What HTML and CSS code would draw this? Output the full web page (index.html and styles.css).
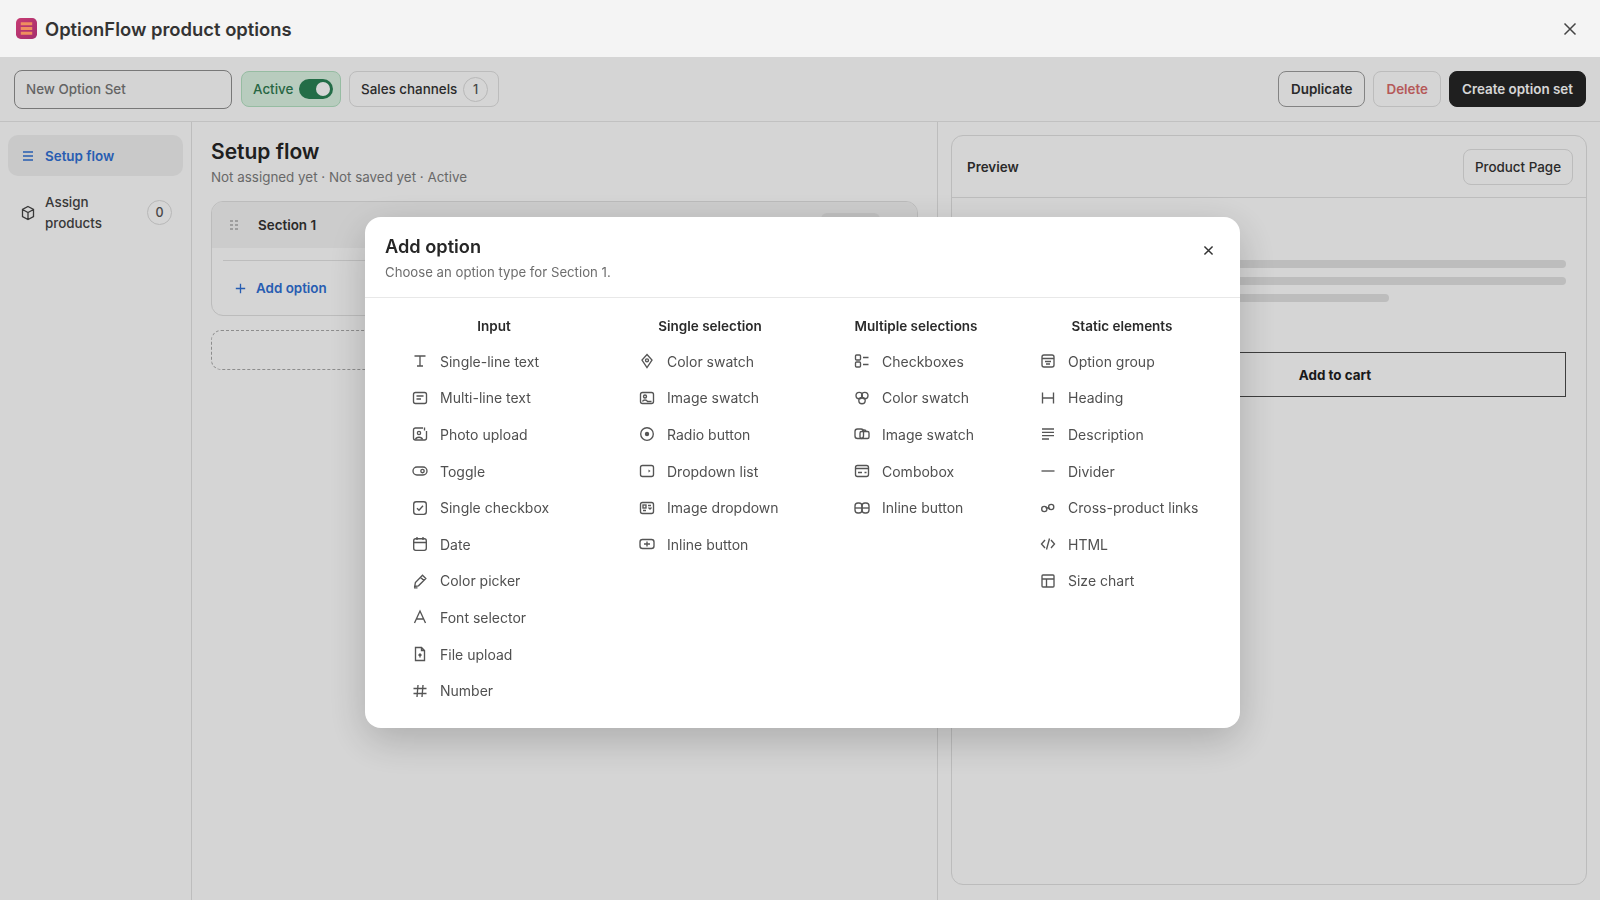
FILE: index.html
```html
<!DOCTYPE html>
<html lang="en">
<head>
    <meta charset="UTF-8">
    <meta name="viewport" content="width=device-width, initial-scale=1.0">
    <title>OptionFlow product options</title>
    <link rel="stylesheet" href="styles.css">
</head>
<body>
    <header class="titlebar">
        <svg class="logo" viewBox="0 0 22 22">
            <defs>
                <linearGradient id="logoFill" x1="0" y1="0" x2="1" y2="1">
                    <stop offset="0" stop-color="#c63a72"/>
                    <stop offset="1" stop-color="#a52f6e"/>
                </linearGradient>
            </defs>
            <rect width="22" height="22" rx="5" fill="url(#logoFill)"/>
            <path d="M5 6h12M5 11h12M5 16h12" stroke="#ef8f5f" stroke-width="3"/>
        </svg>
        <h1 class="app-name">OptionFlow product options</h1>
        <svg class="app-close" viewBox="0 0 16 16"><path d="M2.5 2.5l11 11M13.5 2.5l-11 11"/></svg>
    </header>

    <div class="toolbar">
        <div class="name-input">New Option Set</div>
        <div class="status-pill">Active <span class="switch"></span></div>
        <div class="channels-pill">Sales channels <span class="count">1</span></div>
        <div class="toolbar-actions">
            <button class="btn btn-strong">Duplicate</button>
            <button class="btn btn-danger">Delete</button>
            <button class="btn btn-dark">Create option set</button>
        </div>
    </div>

    <div class="workspace">
        <nav class="sidebar">
            <a class="nav-item nav-active">
                <svg class="nav-icon" viewBox="0 0 16 16"><path d="M3 4h10M3 8h10M3 12h10"/></svg>
                Setup flow
            </a>
            <a class="nav-item">
                <svg class="nav-icon" viewBox="0 0 16 16"><path d="M8 1.5l5.5 3v7L8 14.5l-5.5-3v-7zM2.5 4.5L8 7.5l5.500-3M8 7.500v7"/></svg>
                <span class="nav-label">Assign products</span>
                <span class="count">0</span>
            </a>
        </nav>

        <main class="flow">
            <h2 class="flow-title">Setup flow</h2>
            <p class="flow-meta">Not assigned yet · Not saved yet · Active</p>
            <section class="section-card">
                <div class="section-head">
                    <span class="grip"></span>
                    <strong>Section 1</strong>
                    <span class="section-tag"></span>
                </div>
                <div class="section-body">
                    <a class="add-option">
                        <svg class="add-icon" viewBox="0 0 16 16"><path d="M8 3v10M3 8h10"/></svg>
                        Add option
                    </a>
                </div>
            </section>
            <div class="add-section"></div>
        </main>

        <aside class="preview">
            <div class="preview-head">
                <strong>Preview</strong>
                <button class="btn page-btn">Product Page</button>
            </div>
            <div class="preview-body">
                <div class="preview-image"></div>
                <div class="preview-details">
                    <div class="bar"></div>
                    <div class="bar"></div>
                    <div class="bar bar-short"></div>
                    <div class="cart-btn">Add to cart</div>
                </div>
            </div>
        </aside>
    </div>

    <div class="overlay">
        <div class="modal">
            <div class="modal-head">
                <h2 class="modal-title">Add option</h2>
                <p class="modal-sub">Choose an option type for Section 1.</p>
                <svg class="modal-close" viewBox="0 0 16 16"><path d="M3 3l10 10M13 3L3 13"/></svg>
            </div>
            <div class="option-grid">
                <div class="option-col col-input">
                    <h3 class="col-title">Input</h3>
                    <div class="option"><svg viewBox="0 0 16 16"><path d="M2.5 3h11M8 3v10M5 13h6"/></svg>Single-line text</div>
                    <div class="option"><svg viewBox="0 0 16 16"><rect x="1.5" y="2.5" width="13" height="11" rx="2"/><path d="M4.5 6h7M4.5 9H9"/></svg>Multi-line text</div>
                    <div class="option"><svg viewBox="0 0 16 16"><path d="M11 2H3.5a2 2 0 0 0-2 2v8a2 2 0 0 0 2 2h9a2 2 0 0 0 2-2V5"/><circle cx="7" cy="7" r="1.6"/><path d="M3.5 13.5c.8-3 6.2-3 7 0M12.5 1.5v3"/></svg>Photo upload</div>
                    <div class="option"><svg viewBox="0 0 16 16"><rect x="1" y="4" width="14" height="8" rx="4"/><circle cx="10.5" cy="8" r="1.7"/></svg>Toggle</div>
                    <div class="option"><svg viewBox="0 0 16 16"><rect x="1.7" y="1.7" width="12.6" height="12.6" rx="2.5"/><path d="M5 8.2l2 2 4-4.5"/></svg>Single checkbox</div>
                    <div class="option"><svg viewBox="0 0 16 16"><rect x="1.7" y="2.7" width="12.6" height="11.6" rx="2"/><path d="M1.7 6.5h12.6M5 1v3M11 1v3"/></svg>Date</div>
                    <div class="option"><svg viewBox="0 0 16 16"><path d="M10.5 2.2l3.300 3.300-7.300 7.300-3.800.7.7-4zM8.500 4.200l3.300 3.300M2 14.800h3.500"/></svg>Color picker</div>
                    <div class="option"><svg viewBox="0 0 16 16"><path d="M2.5 14L8 2l5.500 12M4.500 10h7"/></svg>Font selector</div>
                    <div class="option"><svg viewBox="0 0 16 16"><path d="M3.5 1.5h6l3 3v10h-9zM9.5 1.5v3h3M8 11.5V8M6.5 9.5L8 8l1.5 1.5"/></svg>File upload</div>
                    <div class="option"><svg viewBox="0 0 16 16"><path d="M6 2L5 14M11 2l-1 12M1.5 5.5h13M1.5 10.5h13"/></svg>Number</div>
                </div>
                <div class="option-col col-single">
                    <h3 class="col-title">Single selection</h3>
                    <div class="option"><svg viewBox="0 0 16 16"><path d="M8 1.5L13 7l-5 7.500L3 7z"/><circle cx="8" cy="7.3" r="1.5"/></svg>Color swatch</div>
                    <div class="option"><svg viewBox="0 0 16 16"><rect x="1.5" y="2.5" width="13" height="11" rx="2"/><circle cx="6" cy="6.5" r="1.5"/><path d="M3.5 11.5c.8-2 4.2-2 5 0h4"/></svg>Image swatch</div>
                    <div class="option"><svg viewBox="0 0 16 16"><circle cx="8" cy="8" r="6.3"/><circle class="solid" cx="8" cy="8" r="2.2"/></svg>Radio button</div>
                    <div class="option"><svg viewBox="0 0 16 16"><rect x="1.5" y="2.5" width="13" height="11" rx="2"/><path class="solid" d="M9.5 6.500l2 1.500-2 1.500z"/></svg>Dropdown list</div>
                    <div class="option"><svg viewBox="0 0 16 16"><rect x="1.5" y="2.5" width="13" height="11" rx="2"/><rect x="4" y="5" width="3" height="3"/><path d="M9 5.500h3M9.500 7.500l1.500 1.500 1.500-1.500M4 10.500h3"/></svg>Image dropdown</div>
                    <div class="option"><svg viewBox="0 0 16 16"><rect x="1" y="3.5" width="14" height="9" rx="2.5"/><path d="M8 5.500v5M5 8h6"/></svg>Inline button</div>
                </div>
                <div class="option-col col-multi">
                    <h3 class="col-title">Multiple selections</h3>
                    <div class="option"><svg viewBox="0 0 16 16"><rect x="1.5" y="2" width="5" height="5" rx="1"/><rect x="1.5" y="9" width="5" height="5" rx="1"/><path d="M9 4.500h5.500M9 11.500h5.500"/></svg>Checkboxes</div>
                    <div class="option"><svg viewBox="0 0 16 16"><circle cx="5.2" cy="5.5" r="3.2"/><circle cx="10.8" cy="5.5" r="3.2"/><circle cx="8" cy="10.5" r="3.2"/></svg>Color swatch</div>
                    <div class="option"><svg viewBox="0 0 16 16"><rect x="1" y="3" width="8.5" height="9.5" rx="2.5"/><rect x="6" y="5.5" width="9" height="7" rx="1.5"/><path d="M8.500 5.500c0-2 3.500-2 3.500 0"/></svg>Image swatch</div>
                    <div class="option"><svg viewBox="0 0 16 16"><rect x="1.5" y="2.5" width="13" height="11" rx="2"/><path d="M1.500 5.500h13M4 9.500h4M10.500 9.500h2"/></svg>Combobox</div>
                    <div class="option"><svg viewBox="0 0 16 16"><rect x="1" y="3" width="7" height="10" rx="3"/><rect x="8" y="3" width="7" height="10" rx="3"/><path d="M1 8h14"/></svg>Inline button</div>
                </div>
                <div class="option-col col-static">
                    <h3 class="col-title">Static elements</h3>
                    <div class="option"><svg viewBox="0 0 16 16"><rect x="2" y="2" width="12" height="12" rx="2"/><path d="M2 5.500h12M5 8.500h6M6 11h4"/></svg>Option group</div>
                    <div class="option"><svg viewBox="0 0 16 16"><path d="M2.500 2.500v11M13.500 2.500v11M2.500 8h11"/></svg>Heading</div>
                    <div class="option"><svg viewBox="0 0 16 16"><path d="M2 3h12M2 6.300h12M2 9.600h12M2 13h7"/></svg>Description</div>
                    <div class="option"><svg viewBox="0 0 16 16"><path d="M1.500 8h13"/></svg>Divider</div>
                    <div class="option"><svg viewBox="0 0 16 16"><circle cx="4.3" cy="9" r="2.6"/><circle cx="11.2" cy="7" r="2.6"/><path d="M5.500 7.500l4.500 1"/></svg>Cross-product links</div>
                    <div class="option"><svg viewBox="0 0 16 16"><path d="M5 4L1.500 8 5 12M11 4l3.500 4-3.500 4M9.500 2.500l-3 11"/></svg>HTML</div>
                    <div class="option"><svg viewBox="0 0 16 16"><rect x="2" y="2" width="12" height="12" rx="1"/><path d="M2 6h12M6.500 6v8"/></svg>Size chart</div>
                </div>
            </div>
        </div>
    </div>
</body>
</html>
```

FILE: styles.css
```css
* {
    box-sizing: border-box;
}
html, body {
    height: 100%;
}
body {
    margin: 0;
    display: flex;
    flex-direction: column;
    overflow: hidden;
    font-family: Inter, "Noto Sans", sans-serif;
    font-size: 13.4px;
    color: #2a2a2a;
    background-color: #fefefe;
}
h1, h2, h3, p {
    margin: 0;
}
button {
    font: inherit;
}

/* top bar stays above the dimmed layer */
.titlebar {
    height: 57px;
    flex: none;
    display: flex;
    align-items: center;
    padding: 0 22px 0 16px;
    background-color: #f4f4f4;
}
.logo {
    width: 21px;
    height: 21px;
    margin-right: 8px;
}
.app-name {
    font-size: 18.4px;
    font-weight: 600;
    color: #333;
}
.app-close {
    width: 16px;
    height: 16px;
    margin-left: auto;
    fill: none;
    stroke: #444;
    stroke-width: 1.5;
}

.toolbar {
    height: 65px;
    flex: none;
    display: flex;
    align-items: center;
    padding: 0 14px;
    border-bottom: 1px solid #e6e6e6;
}
.name-input {
    width: 218px;
    height: 39px;
    padding: 0 11px;
    line-height: 37px;
    font-weight: 500;
    color: #777;
    border: 1.5px solid #8f8f8f;
    border-radius: 8px;
    background-color: #fdfdfd;
}
.status-pill {
    width: 100px;
    height: 36px;
    margin-left: 9px;
    display: flex;
    align-items: center;
    justify-content: space-between;
    padding: 0 7px 0 11px;
    font-weight: 500;
    color: #2f7a50;
    background-color: #dcf3e3;
    border: 1px solid #b3e0c2;
    border-radius: 8px;
}
.switch {
    width: 34px;
    height: 20px;
    position: relative;
    background-color: #2a8255;
    border-radius: 10px;
}
.switch::after {
    content: "";
    position: absolute;
    top: 3px;
    right: 3px;
    width: 14px;
    height: 14px;
    background-color: #fff;
    border-radius: 50%;
}
.channels-pill {
    width: 150px;
    height: 36px;
    margin-left: 8px;
    display: flex;
    align-items: center;
    justify-content: space-between;
    padding: 0 10px 0 11px;
    font-weight: 500;
    color: #333;
    border: 1px solid #e0e0e0;
    border-radius: 8px;
}
.count {
    width: 25px;
    height: 25px;
    display: flex;
    align-items: center;
    justify-content: center;
    flex: none;
    font-size: 12.5px;
    font-weight: 500;
    color: #555;
    border: 1px solid #dcdcdc;
    border-radius: 50%;
}
.toolbar-actions {
    margin-left: auto;
    display: flex;
    gap: 8px;
}
.btn {
    height: 36px;
    padding: 0 12px;
    font-weight: 600;
    color: #333;
    background: transparent;
    border: 1px solid #e0e0e0;
    border-radius: 8px;
}
.btn-strong {
    border: 1.5px solid #9c9c9c;
}
.btn-danger {
    color: #d86b6b;
}
.btn-dark {
    color: #fff;
    background-color: #262626;
    border-color: #262626;
}

.workspace {
    flex: 1;
    display: flex;
    min-height: 0;
}
.sidebar {
    width: 192px;
    flex: none;
    padding: 13px 8px;
    border-right: 1px solid #e2e2e2;
}
.nav-item {
    display: flex;
    align-items: center;
    padding: 1px 11px 0 12px;
    height: 41px;
    font-weight: 500;
    line-height: 21px;
    color: #444;
    border-radius: 10px;
}
.nav-item + .nav-item {
    height: 62px;
    margin-top: 5px;
}
.nav-active {
    font-weight: 600;
    color: #2f6fd4;
    background-color: #f0f0f0;
}
.nav-icon {
    width: 16px;
    height: 16px;
    flex: none;
    margin-right: 9px;
    fill: none;
    stroke: currentColor;
    stroke-width: 1.3;
}
.nav-label {
    flex: 1;
    width: 70px;
    padding-right: 30px;
}

.flow {
    width: 746px;
    flex: none;
    padding: 16px 19px 0;
    border-right: 1px solid #e2e2e2;
}
.flow-title {
    font-size: 21px;
    font-weight: 600;
    line-height: 28px;
    color: #262626;
}
.flow-meta {
    margin-top: 1px;
    line-height: 20px;
    color: #7d7d7d;
}
.section-card {
    margin-top: 14px;
    height: 115px;
    border: 1px solid #e0e0e0;
    border-radius: 12px;
    overflow: hidden;
}
.section-head {
    height: 46px;
    display: flex;
    align-items: center;
    padding: 0 37px 0 17px;
    background-color: #f4f4f4;
}
.section-head strong {
    font-weight: 600;
    color: #333;
}
.grip {
    width: 9px;
    height: 12px;
    margin-right: 20px;
    background-image: radial-gradient(circle, #bdbdbd 1.2px, transparent 1.4px);
    background-size: 5px 4px;
}
.section-tag {
    width: 59px;
    height: 24px;
    margin-left: auto;
    background-color: #e6e6e6;
    border-radius: 6px;
}
.section-body {
    margin: 12px 11px 0;
    padding-top: 19px;
    border-top: 1px solid #e2e2e2;
}
.add-option {
    display: flex;
    align-items: center;
    padding-left: 10px;
    font-weight: 600;
    color: #2f6fd4;
}
.add-icon {
    width: 15px;
    height: 15px;
    margin-right: 8px;
    fill: none;
    stroke: currentColor;
    stroke-width: 1.4;
}
.add-section {
    margin-top: 14px;
    height: 40px;
    border: 1px dashed #a8a8a8;
    border-radius: 10px;
}

.preview {
    flex: 1;
    margin: 13px 13px 15px;
    border: 1px solid #e0e0e0;
    border-radius: 12px;
}
.preview-head {
    height: 62px;
    display: flex;
    align-items: center;
    justify-content: space-between;
    padding: 0 13px 0 15px;
    border-bottom: 1px solid #e2e2e2;
}
.preview-head strong {
    font-weight: 600;
    color: #333;
}
.page-btn {
    height: 36px;
    padding: 0 11px;
    font-weight: 500;
}
.preview-body {
    display: grid;
    grid-template-columns: 122px 1fr;
    column-gap: 15px;
    padding: 62px 20px 0 15px;
}
.preview-image {
    height: 130px;
    background-color: #f2f2f2;
}
.bar {
    height: 8px;
    margin-bottom: 9px;
    background-color: #e2e2e2;
    border-radius: 4px;
}
.bar-short {
    width: 285px;
}
.cart-btn {
    height: 45px;
    margin-top: 50px;
    display: flex;
    align-items: center;
    justify-content: center;
    font-weight: 700;
    color: #1e1e1e;
    border: 1.5px solid #4a4a4a;
}

/* dimmed layer and dialog */
.overlay {
    position: fixed;
    top: 57px;
    left: 0;
    right: 0;
    bottom: 0;
    background-color: rgba(0, 0, 0, 0.16);
}
.modal {
    position: absolute;
    top: 160px;
    left: 365px;
    width: 875px;
    height: 511px;
    background-color: #fff;
    border-radius: 16px;
    box-shadow: 0 12px 40px rgba(0, 0, 0, 0.2);
}
.modal-head {
    position: relative;
    height: 81px;
    padding: 18px 20px 0;
    border-bottom: 1px solid #e8e8e8;
}
.modal-title {
    font-size: 18.2px;
    font-weight: 600;
    line-height: 22px;
    color: #262626;
}
.modal-sub {
    margin-top: 6px;
    font-size: 13.2px;
    line-height: 18px;
    color: #6e6e6e;
}
.modal-close {
    position: absolute;
    top: 27px;
    right: 25px;
    width: 13px;
    height: 13px;
    fill: none;
    stroke: #333;
    stroke-width: 1.8;
}
.option-grid {
    display: flex;
    padding: 19px 0 0 47px;
}
.option-col {
    flex: none;
}
.col-input {
    width: 227px;
}
.col-single {
    width: 215px;
}
.col-multi {
    width: 186px;
}
.col-static {
    width: 164px;
}
.col-title {
    height: 18px;
    margin-bottom: 8px;
    font-size: 13.5px;
    font-weight: 600;
    line-height: 18px;
    text-align: center;
    white-space: nowrap;
    color: #2a2a2a;
}
.col-input .col-title {
    width: 164px;
}
.col-single .col-title {
    width: 142px;
}
.col-multi .col-title {
    width: 124px;
}
.option {
    height: 36.6px;
    display: flex;
    align-items: center;
    font-size: 14px;
    color: #505050;
}
.option svg {
    width: 16px;
    height: 16px;
    flex: none;
    margin-right: 12px;
    fill: none;
    stroke: #555;
    stroke-width: 1.35;
}
.option svg .solid {
    fill: #555;
    stroke: none;
}
```
